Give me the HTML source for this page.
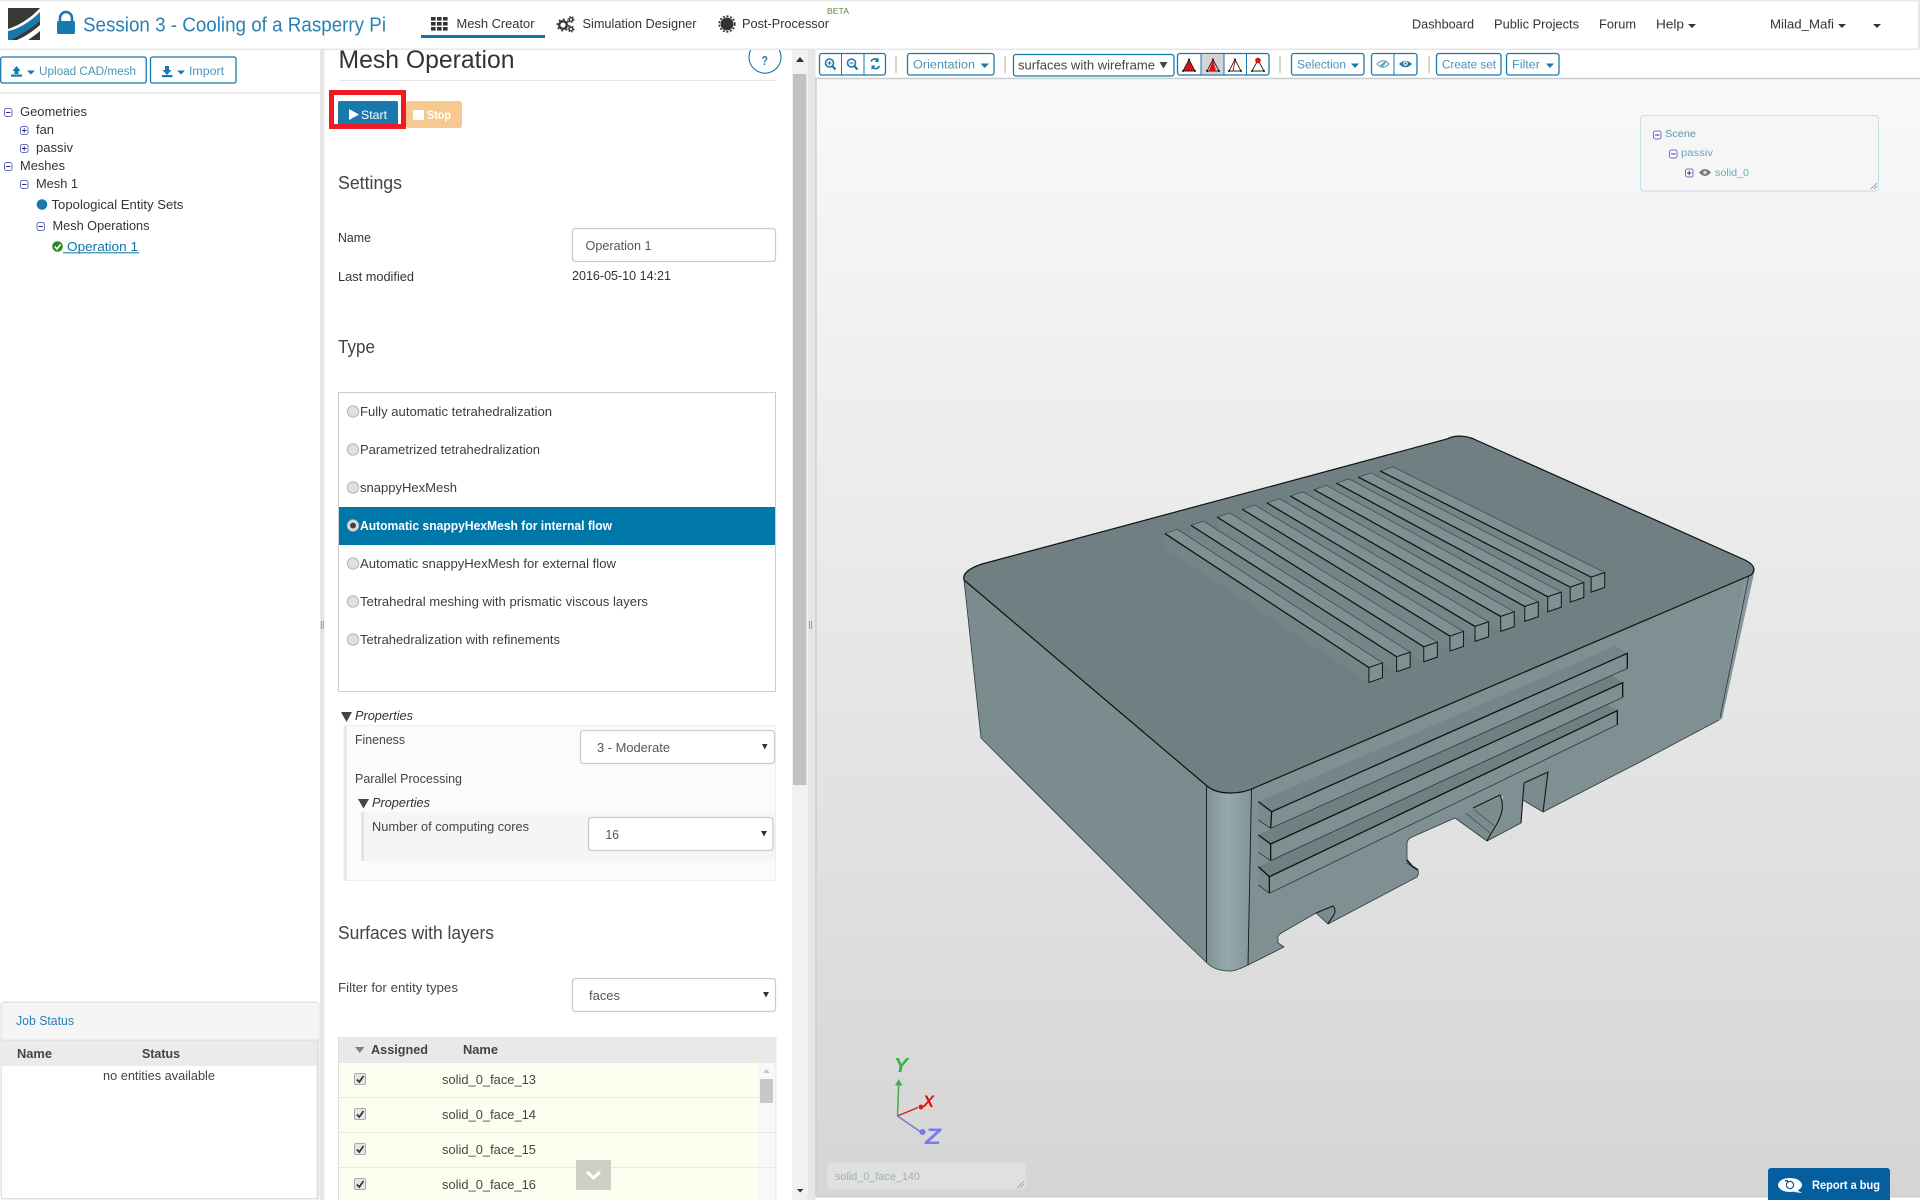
<!DOCTYPE html>
<html lang="en">
<head>
<meta charset="utf-8">
<title>Mesh Operation</title>
<style>
html,body{margin:0;padding:0;background:#fff;width:1920px;height:1200px;overflow:hidden}
svg{display:block}
text{font-family:"Liberation Sans",sans-serif;fill:#333;font-size:13px}
.b{fill:#2a80b0}
.w{fill:#fff}
.h{font-size:18px;fill:#444}
.btn{fill:#fff;stroke:#1779ac;stroke-width:1.3}
.inp{fill:#fff;stroke:#ccc;stroke-width:1.3}
.pm{fill:#fff;stroke:#6a6fb8;stroke-width:1}
.pl{stroke:#2a2f8c;stroke-width:1;fill:none}
.sep{stroke:#c9b8a0;stroke-width:1.2}
.s{fill:#748588}
.t{fill:#7f9093;stroke:#3a4749;stroke-width:.7;vector-effect:non-scaling-stroke}
.f{fill:#7f9093;stroke:#10181a;stroke-width:1;vector-effect:non-scaling-stroke}
.k{fill:none;stroke:#0c1214;stroke-width:1.25;vector-effect:non-scaling-stroke}
.ln{fill:none;stroke:#11181a;stroke-width:1.1}
.tn{fill:none;stroke:#2c383a;stroke-width:.8}
</style>
</head>
<body>
<svg width="1920" height="1200" viewBox="0 0 1920 1200" xmlns="http://www.w3.org/2000/svg">
<defs>
<linearGradient id="vbg" x1="0" y1="0" x2="0" y2="1"><stop offset="0" stop-color="#f9f9f9"/><stop offset="1" stop-color="#d5d5d5"/></linearGradient>
<linearGradient id="cor" x1="0" y1="0" x2="1" y2="0"><stop offset="0" stop-color="#7f9295"/><stop offset=".45" stop-color="#96aaae"/><stop offset="1" stop-color="#82949a"/></linearGradient>
</defs>

<!-- navbar -->
<rect x="0" y="0" width="1920" height="49" fill="#fff"/>
<rect x="0" y="0" width="1920" height="1.5" fill="#e7e7e7"/>
<rect x="0" y="48.5" width="1920" height="1.5" fill="#e7e7e7"/>
<rect x="1918" y="0" width="2" height="50" fill="#e7e7e7"/>

<!-- logo -->
<rect x="8" y="8" width="32" height="32" fill="#3a3835"/>
<path d="M8 29C18 26 31 18 40 8V16C31 25 19 32 8 34Z" fill="#fff"/>
<path d="M8 31C19 29 31 21 40 12V21C31 29 20 35 11 40H8Z" fill="#1a79ac"/>
<path d="M17 40C26 36 33 31 40 25V31C35 35 31 38 28 40Z" fill="#fff"/>
<!-- lock -->
<rect x="57" y="21" width="18" height="13" rx="1.5" fill="#1a79ac"/>
<path d="M60 22V18A6 6 0 0 1 72 18V22" fill="none" stroke="#1a79ac" stroke-width="2.6"/>
<text x="83" y="31.5" style="font-size:20px;fill:#2a80b0" textLength="303" lengthAdjust="spacingAndGlyphs">Session 3 - Cooling of a Rasperry Pi</text>

<!-- nav tabs -->
<g fill="#333">
<rect x="431" y="17" width="4.6" height="3.6"/><rect x="437" y="17" width="4.6" height="3.6"/><rect x="443" y="17" width="4.6" height="3.6"/>
<rect x="431" y="22" width="4.6" height="3.6"/><rect x="437" y="22" width="4.6" height="3.6"/><rect x="443" y="22" width="4.6" height="3.6"/>
<rect x="431" y="27" width="4.6" height="3.6"/><rect x="437" y="27" width="4.6" height="3.6"/><rect x="443" y="27" width="4.6" height="3.6"/>
</g>
<text x="456.5" y="28" textLength="78" lengthAdjust="spacingAndGlyphs">Mesh Creator</text>
<rect x="421" y="35" width="124" height="3" fill="#0f75a8"/>
<g fill="none" stroke="#333">
<circle cx="563" cy="25" r="3.8" stroke-width="2.4"/>
<circle cx="563" cy="25" r="5.8" stroke-width="1.4" stroke-dasharray="2 2.5"/>
<circle cx="571" cy="19.5" r="1.8" stroke-width="1.4"/>
<circle cx="571" cy="19.5" r="3" stroke-width="1" stroke-dasharray="1.5 1.5"/>
<circle cx="571" cy="29" r="1.8" stroke-width="1.4"/>
<circle cx="571" cy="29" r="3" stroke-width="1" stroke-dasharray="1.5 1.5"/>
</g>
<text x="582.5" y="28" textLength="114" lengthAdjust="spacingAndGlyphs">Simulation Designer</text>
<circle cx="727" cy="24" r="6.5" fill="#333"/>
<circle cx="727" cy="24" r="7.8" fill="none" stroke="#333" stroke-width="1.6" stroke-dasharray="2 1.6"/>
<text x="742" y="28" textLength="87" lengthAdjust="spacingAndGlyphs">Post-Processor</text>
<text x="827" y="14" style="font-size:8.5px;fill:#5a8a3a" textLength="22" lengthAdjust="spacingAndGlyphs">BETA</text>

<text x="1412" y="28.5" textLength="62" lengthAdjust="spacingAndGlyphs">Dashboard</text>
<text x="1494" y="28.5" textLength="85" lengthAdjust="spacingAndGlyphs">Public Projects</text>
<text x="1599" y="28.5" textLength="37" lengthAdjust="spacingAndGlyphs">Forum</text>
<text x="1656" y="28.5" textLength="28" lengthAdjust="spacingAndGlyphs">Help</text>
<path d="M1688 24H1696L1692 28Z" fill="#333"/>
<text x="1770" y="28.5" textLength="64" lengthAdjust="spacingAndGlyphs">Milad_Mafi</text>
<path d="M1838 24H1846L1842 28Z" fill="#333"/>
<path d="M1873 24H1881L1877 28Z" fill="#333"/>

<!-- left toolbar -->
<rect x="0.7" y="57" width="145.5" height="26" rx="2" class="btn"/>
<rect x="150.5" y="57" width="85.5" height="26" rx="2" class="btn"/>
<path d="M16.5 66L20.5 71H18.5V74H14.5V71H12.5Z" fill="#1a79ac"/><rect x="11" y="74.5" width="11" height="2.2" fill="#1a79ac"/>
<path d="M27 70.5H35L31 74.5Z" fill="#1a79ac"/>
<text x="39" y="75" style="font-size:11.5px;fill:#4a93bc" textLength="97" lengthAdjust="spacingAndGlyphs">Upload CAD/mesh</text>
<path d="M165 66H169V70H171.5L167 75L162.5 70H165Z" fill="#1a79ac"/><rect x="162" y="75" width="10.5" height="2.2" fill="#1a79ac"/>
<path d="M177 70.5H185L181 74.5Z" fill="#1a79ac"/>
<text x="189" y="75" style="font-size:11.5px;fill:#4a93bc" textLength="35" lengthAdjust="spacingAndGlyphs">Import</text>
<rect x="0" y="92" width="320" height="1.6" fill="#e6e6e6"/>

<!-- tree -->
<g>
<rect x="4.5" y="108.5" width="7.5" height="8" rx="2" class="pm"/><path d="M6 112.5H10.5" class="pl"/>
<rect x="20.5" y="126.5" width="7.5" height="8" rx="2" class="pm"/><path d="M22 130.5H26.5M24.2 128.3V132.7" class="pl"/>
<rect x="20.5" y="144.5" width="7.5" height="8" rx="2" class="pm"/><path d="M22 148.5H26.5M24.2 146.3V150.7" class="pl"/>
<rect x="4.5" y="162.5" width="7.5" height="8" rx="2" class="pm"/><path d="M6 166.5H10.5" class="pl"/>
<rect x="20.5" y="180.5" width="7.5" height="8" rx="2" class="pm"/><path d="M22 184.5H26.5" class="pl"/>
<circle cx="42" cy="204.5" r="5.3" fill="#1a79ac"/>
<rect x="37" y="222.5" width="7.5" height="8" rx="2" class="pm"/><path d="M38.5 226.5H43" class="pl"/>
<circle cx="57.5" cy="246.5" r="5.3" fill="#2a8a2a"/>
<path d="M54.7 246.5L57 249L60.5 244.5" fill="none" stroke="#fff" stroke-width="1.6"/>
</g>
<text x="20" y="116" textLength="67" lengthAdjust="spacingAndGlyphs">Geometries</text>
<text x="36" y="134" textLength="18" lengthAdjust="spacingAndGlyphs">fan</text>
<text x="36" y="152" textLength="37" lengthAdjust="spacingAndGlyphs">passiv</text>
<text x="20" y="170" textLength="45" lengthAdjust="spacingAndGlyphs">Meshes</text>
<text x="36" y="188" textLength="42" lengthAdjust="spacingAndGlyphs">Mesh 1</text>
<text x="51.5" y="209" textLength="132" lengthAdjust="spacingAndGlyphs">Topological Entity Sets</text>
<text x="52.5" y="230" textLength="97" lengthAdjust="spacingAndGlyphs">Mesh Operations</text>
<text x="67" y="251" style="fill:#0f75a8" textLength="71" lengthAdjust="spacingAndGlyphs">Operation 1</text>
<rect x="63" y="252.3" width="76" height="1" fill="#0f75a8"/>

<!-- splitters -->
<rect x="320" y="50" width="4.5" height="1150" fill="#e6e6e6"/>
<path d="M321.3 621V629M323.2 621V629" stroke="#888" stroke-width=".8"/>
<rect x="792" y="50" width="16" height="1150" fill="#f1f1f1"/>
<rect x="793" y="74" width="13.3" height="711" fill="#c1c1c1"/>
<rect x="808" y="50" width="7.5" height="1150" fill="#e6e6e6"/>
<path d="M809.6 621V629M811.6 621V629" stroke="#888" stroke-width=".8"/>
<path d="M796 62L800 57L804 62Z" fill="#333"/>
<path d="M797 1189H803.5L800.2 1192.5Z" fill="#333"/>

<!-- main panel heading -->
<text x="338.5" y="68" style="font-size:25px;fill:#333" textLength="176" lengthAdjust="spacingAndGlyphs">Mesh Operation</text>
<rect x="339" y="80" width="437" height="1" fill="#e5e5e5"/>
<path d="M750.7 50A16 16 0 1 0 779.3 50" fill="none" stroke="#1a79ac" stroke-width="1.1"/>
<text x="761.5" y="65" class="b" style="font-size:13px;font-weight:bold" textLength="6.5" lengthAdjust="spacingAndGlyphs">?</text>

<!-- start / stop -->
<rect x="406" y="101" width="56" height="27" rx="2.5" fill="#f5c98f"/>
<rect x="413" y="110" width="11" height="10" rx="1" fill="#fff"/>
<text x="427" y="119" class="w" style="font-size:12px;font-weight:bold" textLength="24" lengthAdjust="spacingAndGlyphs">Stop</text>
<rect x="338" y="101" width="60" height="24" rx="2" fill="#1a79ac"/>
<path d="M349 109L359 114.5L349 120Z" fill="#fff"/>
<text x="361" y="119" class="w" style="font-size:12px" textLength="26" lengthAdjust="spacingAndGlyphs">Start</text>
<rect x="331.5" y="92.5" width="72" height="34" fill="none" stroke="#ed1c24" stroke-width="5"/>

<!-- settings -->
<text x="338" y="189" class="h" textLength="64" lengthAdjust="spacingAndGlyphs">Settings</text>
<text x="338" y="242" textLength="33" lengthAdjust="spacingAndGlyphs">Name</text>
<rect x="572.5" y="228.5" width="203" height="33" rx="3" class="inp"/>
<text x="585.5" y="250" style="fill:#555" textLength="66" lengthAdjust="spacingAndGlyphs">Operation 1</text>
<text x="338" y="281" textLength="76" lengthAdjust="spacingAndGlyphs">Last modified</text>
<text x="572" y="280" textLength="99" lengthAdjust="spacingAndGlyphs">2016-05-10 14:21</text>

<!-- type -->
<text x="338" y="353" class="h" textLength="37" lengthAdjust="spacingAndGlyphs">Type</text>
<rect x="338.5" y="392.5" width="437" height="299" fill="#fff" stroke="#ccc" stroke-width="1"/>
<rect x="339" y="507" width="436" height="38" fill="#0077a9"/>
<g fill="#e0e0e0" stroke="#b5b5b5" stroke-width="1">
<circle cx="353" cy="411.5" r="5.7"/><circle cx="353" cy="449.5" r="5.7"/><circle cx="353" cy="487.5" r="5.7"/>
<circle cx="353" cy="525.5" r="5.7"/><circle cx="353" cy="563.5" r="5.7"/><circle cx="353" cy="601.5" r="5.7"/><circle cx="353" cy="639.5" r="5.7"/>
</g>
<circle cx="353" cy="525.5" r="3" fill="#444"/>
<text x="360" y="416" style="fill:#3d3d3d" textLength="192" lengthAdjust="spacingAndGlyphs">Fully automatic tetrahedralization</text>
<text x="360" y="454" style="fill:#3d3d3d" textLength="180" lengthAdjust="spacingAndGlyphs">Parametrized tetrahedralization</text>
<text x="360" y="492" style="fill:#3d3d3d" textLength="97" lengthAdjust="spacingAndGlyphs">snappyHexMesh</text>
<text x="360" y="530" class="w" style="font-weight:bold" textLength="252" lengthAdjust="spacingAndGlyphs">Automatic snappyHexMesh for internal flow</text>
<text x="360" y="568" style="fill:#3d3d3d" textLength="256" lengthAdjust="spacingAndGlyphs">Automatic snappyHexMesh for external flow</text>
<text x="360" y="606" style="fill:#3d3d3d" textLength="288" lengthAdjust="spacingAndGlyphs">Tetrahedral meshing with prismatic viscous layers</text>
<text x="360" y="644" style="fill:#3d3d3d" textLength="200" lengthAdjust="spacingAndGlyphs">Tetrahedralization with refinements</text>

<!-- properties -->
<path d="M341 712H352L346.5 722Z" fill="#444"/>
<text x="355" y="720" style="font-style:italic" textLength="58" lengthAdjust="spacingAndGlyphs">Properties</text>
<rect x="344" y="725.5" width="431.5" height="155" fill="#fbfbfb" stroke="#eee" stroke-width="1"/>
<rect x="344" y="725" width="3" height="156" fill="#e8e8e8"/>
<text x="355" y="744" style="fill:#444" textLength="50" lengthAdjust="spacingAndGlyphs">Fineness</text>
<rect x="580.5" y="730.5" width="194" height="33" rx="3" class="inp"/>
<text x="597" y="752" style="fill:#555" textLength="73" lengthAdjust="spacingAndGlyphs">3 - Moderate</text>
<path d="M762 744H767.5L764.7 749.5Z" fill="#333"/>
<text x="355" y="783" style="fill:#444" textLength="107" lengthAdjust="spacingAndGlyphs">Parallel Processing</text>
<path d="M358 799H369L363.5 808.5Z" fill="#444"/>
<text x="372" y="807" style="font-style:italic" textLength="58" lengthAdjust="spacingAndGlyphs">Properties</text>
<rect x="361" y="812" width="414" height="49" fill="#f5f5f5"/>
<rect x="361" y="812" width="3" height="49" fill="#e4e4e4"/>
<text x="372" y="831" style="fill:#444" textLength="157" lengthAdjust="spacingAndGlyphs">Number of computing cores</text>
<rect x="588.5" y="817.5" width="184.5" height="33" rx="3" class="inp"/>
<text x="605.5" y="839" style="fill:#555" textLength="13.5" lengthAdjust="spacingAndGlyphs">16</text>
<path d="M761 831H767L764 836.5Z" fill="#333"/>

<!-- surfaces with layers -->
<text x="338" y="939" class="h" textLength="156" lengthAdjust="spacingAndGlyphs">Surfaces with layers</text>
<text x="338" y="992" style="fill:#444" textLength="120" lengthAdjust="spacingAndGlyphs">Filter for entity types</text>
<rect x="572.5" y="978.5" width="203" height="33" rx="3" class="inp"/>
<text x="589" y="1000" style="fill:#555" textLength="31" lengthAdjust="spacingAndGlyphs">faces</text>
<path d="M763 992H769L766 997.5Z" fill="#333"/>

<!-- table -->
<rect x="338" y="1037" width="438" height="163" fill="#fff"/>
<rect x="338" y="1037" width="438" height="26" fill="#e9e9e9"/>
<path d="M355 1047H364.5L359.7 1053Z" fill="#6f8794"/>
<text x="371" y="1054" style="font-weight:bold;fill:#444" textLength="57" lengthAdjust="spacingAndGlyphs">Assigned</text>
<text x="463" y="1054" style="font-weight:bold;fill:#444" textLength="35" lengthAdjust="spacingAndGlyphs">Name</text>
<rect x="339" y="1063" width="419" height="137" fill="#fefef0"/>
<rect x="758" y="1063" width="18" height="137" fill="#f8f8f8"/>
<path d="M338 1097.5H776M338 1132.5H776M338 1167.5H776" stroke="#ebebe2" stroke-width="1"/>
<rect x="338" y="1037" width="1" height="163" fill="#ddd"/>
<rect x="775.5" y="1037" width="1" height="163" fill="#e5e5e5"/>
<path d="M763 1073L766.5 1069L770 1073Z" fill="#c8c8c8"/>
<rect x="760" y="1079" width="13" height="24" fill="#c8c8c8"/>
<g>
<rect x="354.5" y="1073.5" width="11" height="11" rx="1.5" fill="#e6e6e6" stroke="#aaa"/>
<rect x="354.5" y="1108.5" width="11" height="11" rx="1.5" fill="#e6e6e6" stroke="#aaa"/>
<rect x="354.5" y="1143.5" width="11" height="11" rx="1.5" fill="#e6e6e6" stroke="#aaa"/>
<rect x="354.5" y="1178.5" width="11" height="11" rx="1.5" fill="#e6e6e6" stroke="#aaa"/>
<path d="M356.8 1079.5L359.3 1082L363.5 1076M356.8 1114.5L359.3 1117L363.5 1111M356.8 1149.5L359.3 1152L363.5 1146M356.8 1184.5L359.3 1187L363.5 1181" fill="none" stroke="#333" stroke-width="1.7"/>
</g>
<text x="442" y="1084" style="fill:#444" textLength="94" lengthAdjust="spacingAndGlyphs">solid_0_face_13</text>
<text x="442" y="1119" style="fill:#444" textLength="94" lengthAdjust="spacingAndGlyphs">solid_0_face_14</text>
<text x="442" y="1154" style="fill:#444" textLength="94" lengthAdjust="spacingAndGlyphs">solid_0_face_15</text>
<text x="442" y="1189" style="fill:#444" textLength="94" lengthAdjust="spacingAndGlyphs">solid_0_face_16</text>
<rect x="576" y="1160" width="35" height="30" fill="#cfcfc6"/>
<path d="M587 1172L593.5 1178L600 1172" fill="none" stroke="#fff" stroke-width="3"/>

<!-- job status -->
<rect x="1" y="1002" width="318" height="197" rx="3" fill="#fff" stroke="#e2e2e2" stroke-width="1"/>
<path d="M1.5 1040V1005A3 3 0 0 1 4.5 1002.5H316A3 3 0 0 1 319 1005V1040Z" fill="#f5f5f5" stroke="#e2e2e2" stroke-width="1"/>
<rect x="1" y="1040" width="318" height="1.4" fill="#e2e2e2"/>
<rect x="2" y="1041" width="315" height="25" fill="#ebebeb"/>
<rect x="316.5" y="1041" width="2" height="158" fill="#e4e4e4"/>
<rect x="1" y="1041" width="1" height="158" fill="#e4e4e4"/>
<rect x="1" y="1198" width="318" height="1.5" fill="#e2e2e2"/>
<text x="16" y="1025" class="b" style="font-size:12.5px" textLength="58" lengthAdjust="spacingAndGlyphs">Job Status</text>
<text x="17" y="1058" style="font-weight:bold;fill:#444" textLength="35" lengthAdjust="spacingAndGlyphs">Name</text>
<text x="142" y="1058" style="font-weight:bold;fill:#444" textLength="38" lengthAdjust="spacingAndGlyphs">Status</text>
<text x="103" y="1080" style="fill:#444" textLength="112" lengthAdjust="spacingAndGlyphs">no entities available</text>

<!-- viewer toolbar -->
<g>
<rect x="819.5" y="53.5" width="66" height="21.5" rx="2.5" class="btn"/>
<path d="M841.5 53.5V75M864 53.5V75" stroke="#1779ac" stroke-width="1"/>
<g fill="none" stroke="#1a79ac">
<circle cx="829.5" cy="63" r="4" stroke-width="1.6"/><path d="M832.5 66.3L835.5 69.5" stroke-width="2.2"/><path d="M827.5 63H831.5M829.5 61V65" stroke-width="1.1"/>
<circle cx="851.5" cy="63" r="4" stroke-width="1.6"/><path d="M854.5 66.3L857.5 69.5" stroke-width="2.2"/><path d="M849.5 63H853.5" stroke-width="1.1"/>
<path d="M871 61.5A4.5 4.5 0 0 1 878.5 60.5M879.5 66A4.5 4.5 0 0 1 872 67" stroke-width="1.7"/>
</g>
<path d="M878.5 57.5V62H874.5Z M871.5 70V65.5H875.5Z" fill="#1a79ac"/>
</g>
<path d="M896 56V73M1005 56V73M1280 56V73M1429 56V73" class="sep"/>
<rect x="907.5" y="53.5" width="86.5" height="21.5" rx="2.5" class="btn"/>
<text x="913" y="68.5" style="font-size:11.5px;fill:#4a93bc" textLength="62" lengthAdjust="spacingAndGlyphs">Orientation</text>
<path d="M980.5 63.5H989L984.7 68Z" fill="#1a79ac"/>
<rect x="1013.5" y="54.5" width="160.5" height="21.5" rx="2.5" class="btn"/>
<text x="1018" y="69.5" style="fill:#444" textLength="137" lengthAdjust="spacingAndGlyphs">surfaces with wireframe</text>
<path d="M1159.5 62H1167.5L1163.5 68.5Z" fill="#444"/>

<!-- view modes -->
<rect x="1177.5" y="53.5" width="91.5" height="21.5" rx="2.5" class="btn"/>
<rect x="1201" y="54" width="23" height="20.5" fill="#d4d4d4"/>
<path d="M1201 53.5V75M1224 53.5V75M1246.5 53.5V75" stroke="#1779ac" stroke-width="1"/>
<path d="M1189 59.5L1195 71H1183Z" fill="#e01010" stroke="#222" stroke-width=".9"/>
<path d="M1213 59.5L1219 71H1207Z" fill="none" stroke="#222" stroke-width=".9"/><path d="M1213 59.5L1216 71H1209Z" fill="#e01010"/>
<path d="M1235 59.5L1241 71H1229Z" fill="#fff" stroke="#222" stroke-width=".9"/><path d="M1235 61L1233 71" stroke="#e01010" stroke-width="1"/>
<path d="M1258 60L1264 71H1252Z" fill="#fff" stroke="#222" stroke-width=".9"/><circle cx="1258" cy="60.5" r="2.8" fill="#e01010"/>
<g fill="#111"><circle cx="1189" cy="59.5" r="1"/><circle cx="1183" cy="71" r="1"/><circle cx="1195" cy="71" r="1"/><circle cx="1213" cy="59.5" r="1"/><circle cx="1207" cy="71" r="1"/><circle cx="1219" cy="71" r="1"/><circle cx="1235" cy="59.5" r="1"/><circle cx="1229" cy="71" r="1"/><circle cx="1241" cy="71" r="1"/><circle cx="1252" cy="71" r="1"/><circle cx="1264" cy="71" r="1"/></g>

<rect x="1291.5" y="53.5" width="72.5" height="21.5" rx="2.5" class="btn"/>
<text x="1297" y="68.5" style="font-size:11.5px;fill:#4a93bc" textLength="49" lengthAdjust="spacingAndGlyphs">Selection</text>
<path d="M1351 63.5H1359L1355 68Z" fill="#1a79ac"/>

<rect x="1371.5" y="53.5" width="45.5" height="21.5" rx="2.5" class="btn"/>
<path d="M1394 53.5V75" stroke="#1779ac" stroke-width="1"/>
<path d="M1377 64Q1383 57.5 1389 64Q1383 70.5 1377 64Z" fill="none" stroke="#6ba5c6" stroke-width="1.2"/><path d="M1380 65L1386 60.5V63L1382 68Z" fill="#6ba5c6"/>
<path d="M1399 64Q1405.5 57.5 1412 64Q1405.5 70.5 1399 64Z" fill="#1a79ac"/><circle cx="1405.5" cy="63.5" r="2.3" fill="#fff"/><circle cx="1405.5" cy="63.5" r="1.1" fill="#1a79ac"/>

<rect x="1436.5" y="53.5" width="64.5" height="21.5" rx="2.5" class="btn"/>
<text x="1442" y="68.5" style="font-size:11.5px;fill:#4a93bc" textLength="54" lengthAdjust="spacingAndGlyphs">Create set</text>
<rect x="1506.5" y="53.5" width="52.5" height="21.5" rx="2.5" class="btn"/>
<text x="1512" y="68.5" style="font-size:11.5px;fill:#4a93bc" textLength="28" lengthAdjust="spacingAndGlyphs">Filter</text>
<path d="M1546 63.5H1554L1550 68Z" fill="#1a79ac"/>

<!-- viewer -->
<rect x="816" y="79" width="1104" height="1118" fill="url(#vbg)"/>
<path d="M816 1197V78.5H1920" fill="none" stroke="#ccc" stroke-width="1.4"/>
<rect x="816" y="1196.5" width="1104" height="1" fill="#c8c8c8"/>

<!-- scene panel -->
<rect x="1640.5" y="115.5" width="238" height="75.5" rx="3.5" fill="#f6f6f6" stroke="#c4e0ea" stroke-width="1"/>
<path d="M1871 189L1877 183M1874 189L1877 186" stroke="#888" stroke-width=".8"/>
<rect x="1653.5" y="131" width="7.5" height="8" rx="2" class="pm"/><path d="M1655 135H1659.5" class="pl"/>
<text x="1665" y="137" style="font-size:10px;fill:#5f93ad" textLength="31" lengthAdjust="spacingAndGlyphs">Scene</text>
<rect x="1669.5" y="150" width="7.5" height="8" rx="2" class="pm"/><path d="M1671 154H1675.5" class="pl"/>
<text x="1681" y="156" style="font-size:10px;fill:#6ca7c6" textLength="32" lengthAdjust="spacingAndGlyphs">passiv</text>
<rect x="1685.5" y="169" width="7.5" height="8" rx="2" class="pm"/><path d="M1687 173H1691.5M1689.2 170.8V175.2" class="pl"/>
<path d="M1699 172.5Q1705 165.5 1711 172.5Q1705 179.5 1699 172.5Z" fill="#777"/><circle cx="1705" cy="172.5" r="1.8" fill="#ddd"/>
<text x="1715" y="176" style="font-size:10px;fill:#6ca7c6" textLength="34" lengthAdjust="spacingAndGlyphs">solid_0</text>

<!-- 3D model -->
<!-- notch interiors -->
<path d="M1455 818L1473 808L1500 795L1503 802L1498 817L1487 841Z" fill="#7b8c8f"/>
<path d="M1462 810L1490 833M1472 808L1497 828" stroke="#3b4749" stroke-width=".7" fill="none"/>
<path d="M1316 913L1333 906L1335 913L1328 924Z" fill="#7b8c8f"/>
<!-- left wall -->
<path d="M964 580L981 738L1180 937L1207 963V786Z" fill="#7b8c8f"/>
<!-- right wall -->
<path d="M1252 788L1751 575L1719 720L1640 762L1543 812L1523 800L1521 823L1487 841L1498 817L1503 796L1455 818L1412 837C1408 839 1407 841 1407 844V863L1418 870C1419 873 1418 875 1417 877L1328 924L1335 913L1333 906L1316 913L1283 932C1279 934 1277 937 1278 938V943L1284 947L1248 965Z" fill="#7f9093"/>
<!-- rear small recess -->
<path d="M1524 783L1548 772L1543 812L1523 800Z" fill="#7a8b8e"/>
<path d="M1524 783L1548 772L1543 812M1524 783L1521 823" class="ln"/>
<!-- right corner sliver -->
<path d="M1745 574L1755 569L1722 719L1719 720Z" fill="#85979a"/>
<path d="M1749 575L1720 718" class="tn"/>
<!-- corner column -->
<path d="M1207 786C1214 791 1222 793 1230 793C1238 793 1246 791 1252 788L1248 965C1240 969 1234 971 1230 971C1220 971 1212 968 1207 963Z" fill="url(#cor)"/>
<path d="M1206.5 786V962M1251.5 789L1248 965" class="ln" style="stroke-width:.9"/>

<!-- rails on right wall -->
<g transform="translate(1180 620) scale(.33333)">
<path d="M235 545L275 575L1342 100L1305 78Z" fill="#75868a"/>
<path d="M275 575L272 625L1342 145V100Z" fill="#7f9093"/>
<path d="M235 545L275 575L272 625L235 600Z" fill="#7a8b8e"/>
<path d="M235 645L272 672L1328 188L1295 165Z" fill="#6f7f82"/>
<path d="M272 672V722L1328 232V188Z" fill="#7f9093"/>
<path d="M235 645L272 672V722L235 697Z" fill="#7a8b8e"/>
<path d="M235 740L268 770L1312 272L1280 252Z" fill="#6f7f82"/>
<path d="M268 770V820L1310 315L1312 272Z" fill="#7f9093"/>
<path d="M235 740L268 770V820L235 795Z" fill="#7a8b8e"/>
<g fill="none">
<path d="M235 545L275 575L1342 100V145M275 575L272 625M235 645L272 672L1328 188V232M272 672V722M235 740L268 770L1312 272V315M268 770V820" stroke="#0c1214" stroke-width="3.9"/>
<path d="M272 625L1342 145M272 722L1328 232M268 820L1310 315M235 600L272 625M235 697L272 722M235 795L268 820" stroke="#2a3638" stroke-width="2.4"/>
</g>
</g>

<!-- top face -->
<path d="M964 580C962 573 970 568 982 564L1447 439C1454 435 1466 435 1476 440L1745 560C1753 564 1757 569 1751 575L1254 788C1246 792 1238 793 1230 793C1222 793 1213 791 1207 786Z" fill="#707f82"/>
<path d="M964 580C962 573 970 568 982 564L1447 439C1454 435 1466 435 1476 440L1745 560C1753 564 1757 569 1751 575L1254 788C1246 792 1238 793 1230 793C1222 793 1213 791 1207 786Z" fill="none" stroke="#0c1214" stroke-width="1.2"/>

<!-- top fins -->
<g transform="translate(940 420) scale(.523 .3571)">
<path class="s" d="M842 143L1245 440V482L842 183Z"/><path class="t" d="M842 143L866 131L1271 427L1245 440Z"/><path class="k" d="M842 143L1245 440"/><path class="f" d="M1245 440L1271 427V469L1245 482Z"/>
<path class="s" d="M800 160L1205 468V510L800 200Z"/><path class="t" d="M800 160L824 148L1231 455L1205 468Z"/><path class="k" d="M800 160L1205 468"/><path class="f" d="M1205 468L1231 455V497L1205 510Z"/>
<path class="s" d="M758 177L1162 495V537L758 217Z"/><path class="t" d="M758 177L782 165L1188 482L1162 495Z"/><path class="k" d="M758 177L1162 495"/><path class="f" d="M1162 495L1188 482V524L1162 537Z"/>
<path class="s" d="M715 195L1118 522V564L715 235Z"/><path class="t" d="M715 195L739 183L1144 509L1118 522Z"/><path class="k" d="M715 195L1118 522"/><path class="f" d="M1118 522L1144 509V551L1118 564Z"/>
<path class="s" d="M670 213L1072 550V592L670 253Z"/><path class="t" d="M670 213L694 201L1098 537L1072 550Z"/><path class="k" d="M670 213L1072 550"/><path class="f" d="M1072 550L1098 537V579L1072 592Z"/>
<path class="s" d="M625 232L1023 578V620L625 272Z"/><path class="t" d="M625 232L649 220L1049 565L1023 578Z"/><path class="k" d="M625 232L1023 578"/><path class="f" d="M1023 578L1049 565V607L1023 620Z"/>
<path class="s" d="M578 250L975 605V647L578 290Z"/><path class="t" d="M578 250L602 238L1001 592L975 605Z"/><path class="k" d="M578 250L975 605"/><path class="f" d="M975 605L1001 592V634L975 647Z"/>
<path class="s" d="M530 272L925 635V677L530 312Z"/><path class="t" d="M530 272L554 260L951 622L925 635Z"/><path class="k" d="M530 272L925 635"/><path class="f" d="M925 635L951 622V664L925 677Z"/>
<path class="s" d="M480 295L873 663V705L480 335Z"/><path class="t" d="M480 295L504 283L899 650L873 663Z"/><path class="k" d="M480 295L873 663"/><path class="f" d="M873 663L899 650V692L873 705Z"/>
<path class="s" d="M430 318L820 693V735L430 360Z"/><path class="t" d="M430 318L454 306L846 680L820 693Z"/><path class="k" d="M430 318L820 693"/><path class="f" d="M820 693L846 680V722L820 735Z"/>
</g>

<!-- model outlines -->
<path d="M964 580L981 738L1180 937L1207 963" class="tn"/>
<path d="M1719 720L1640 762L1543 812L1523 800M1521 823L1487 841L1455 818L1412 837C1408 839 1407 841 1407 844V863L1418 870C1419 873 1418 875 1417 877L1328 924L1316 913L1283 932C1279 934 1277 937 1278 938V943L1284 947L1248 965C1240 969 1234 971 1230 971C1220 971 1212 968 1207 963" class="tn"/>
<path d="M1487 841C1491 832 1497 826 1500 817C1503 810 1503 802 1500 795L1473 808" class="ln"/>
<path d="M1328 924C1331 918 1335 915 1335 911C1335 909 1334 907 1333 906L1316 913" class="ln"/>
<path d="M1407 860L1412 866L1418 870" stroke="#10181a" stroke-width="1.6" fill="none"/>

<!-- axes -->
<path d="M897.5 1116L898.7 1084" stroke="#4aa74a" stroke-width="1.5"/>
<path d="M895 1085.5L898.7 1079L902.5 1085.5Z" fill="#4aa74a"/>
<path d="M897.5 1116L918 1107.5" stroke="#cc2020" stroke-width="1.3"/>
<circle cx="921" cy="1107" r="2.4" fill="#cc2020"/>
<path d="M897.5 1116L920 1131.5" stroke="#7878e0" stroke-width="1.5"/>
<circle cx="922.5" cy="1132" r="3" fill="#7878e0"/>
<text x="894" y="1072" style="font-size:20px;font-weight:bold;font-style:italic;fill:#3cb043" textLength="14" lengthAdjust="spacingAndGlyphs">Y</text>
<text x="923" y="1107" style="font-size:17px;font-weight:bold;font-style:italic;fill:#e01010" textLength="11" lengthAdjust="spacingAndGlyphs">X</text>
<text x="925" y="1144" style="font-size:22px;font-weight:bold;font-style:italic;fill:#7a7af0" textLength="16" lengthAdjust="spacingAndGlyphs">Z</text>

<!-- hover label -->
<rect x="827.5" y="1163" width="198" height="26" rx="3" fill="#e0e0e0" stroke="#d5dfe4" stroke-width="1"/>
<text x="835" y="1180" style="font-size:11px;fill:#9db0ba" textLength="85" lengthAdjust="spacingAndGlyphs">solid_0_face_140</text>
<path d="M1017 1188L1024 1181M1020 1188L1024 1184" stroke="#999" stroke-width=".8"/>

<!-- report a bug -->
<path d="M1768 1200V1171A3 3 0 0 1 1771 1168H1887A3 3 0 0 1 1890 1171V1200Z" fill="#055f9e"/>
<ellipse cx="1790" cy="1185" rx="12" ry="7" fill="#fff"/>
<path d="M1797 1190L1802 1193L1794 1192Z" fill="#fff"/>
<circle cx="1790" cy="1185" r="3.6" fill="none" stroke="#055f9e" stroke-width="1.2"/>
<rect x="1785" y="1180" width="3" height="1.5" fill="#055f9e"/>
<text x="1812" y="1189" class="w" style="font-size:12px;font-weight:bold" textLength="68" lengthAdjust="spacingAndGlyphs">Report a bug</text>
</svg>
</body>
</html>
